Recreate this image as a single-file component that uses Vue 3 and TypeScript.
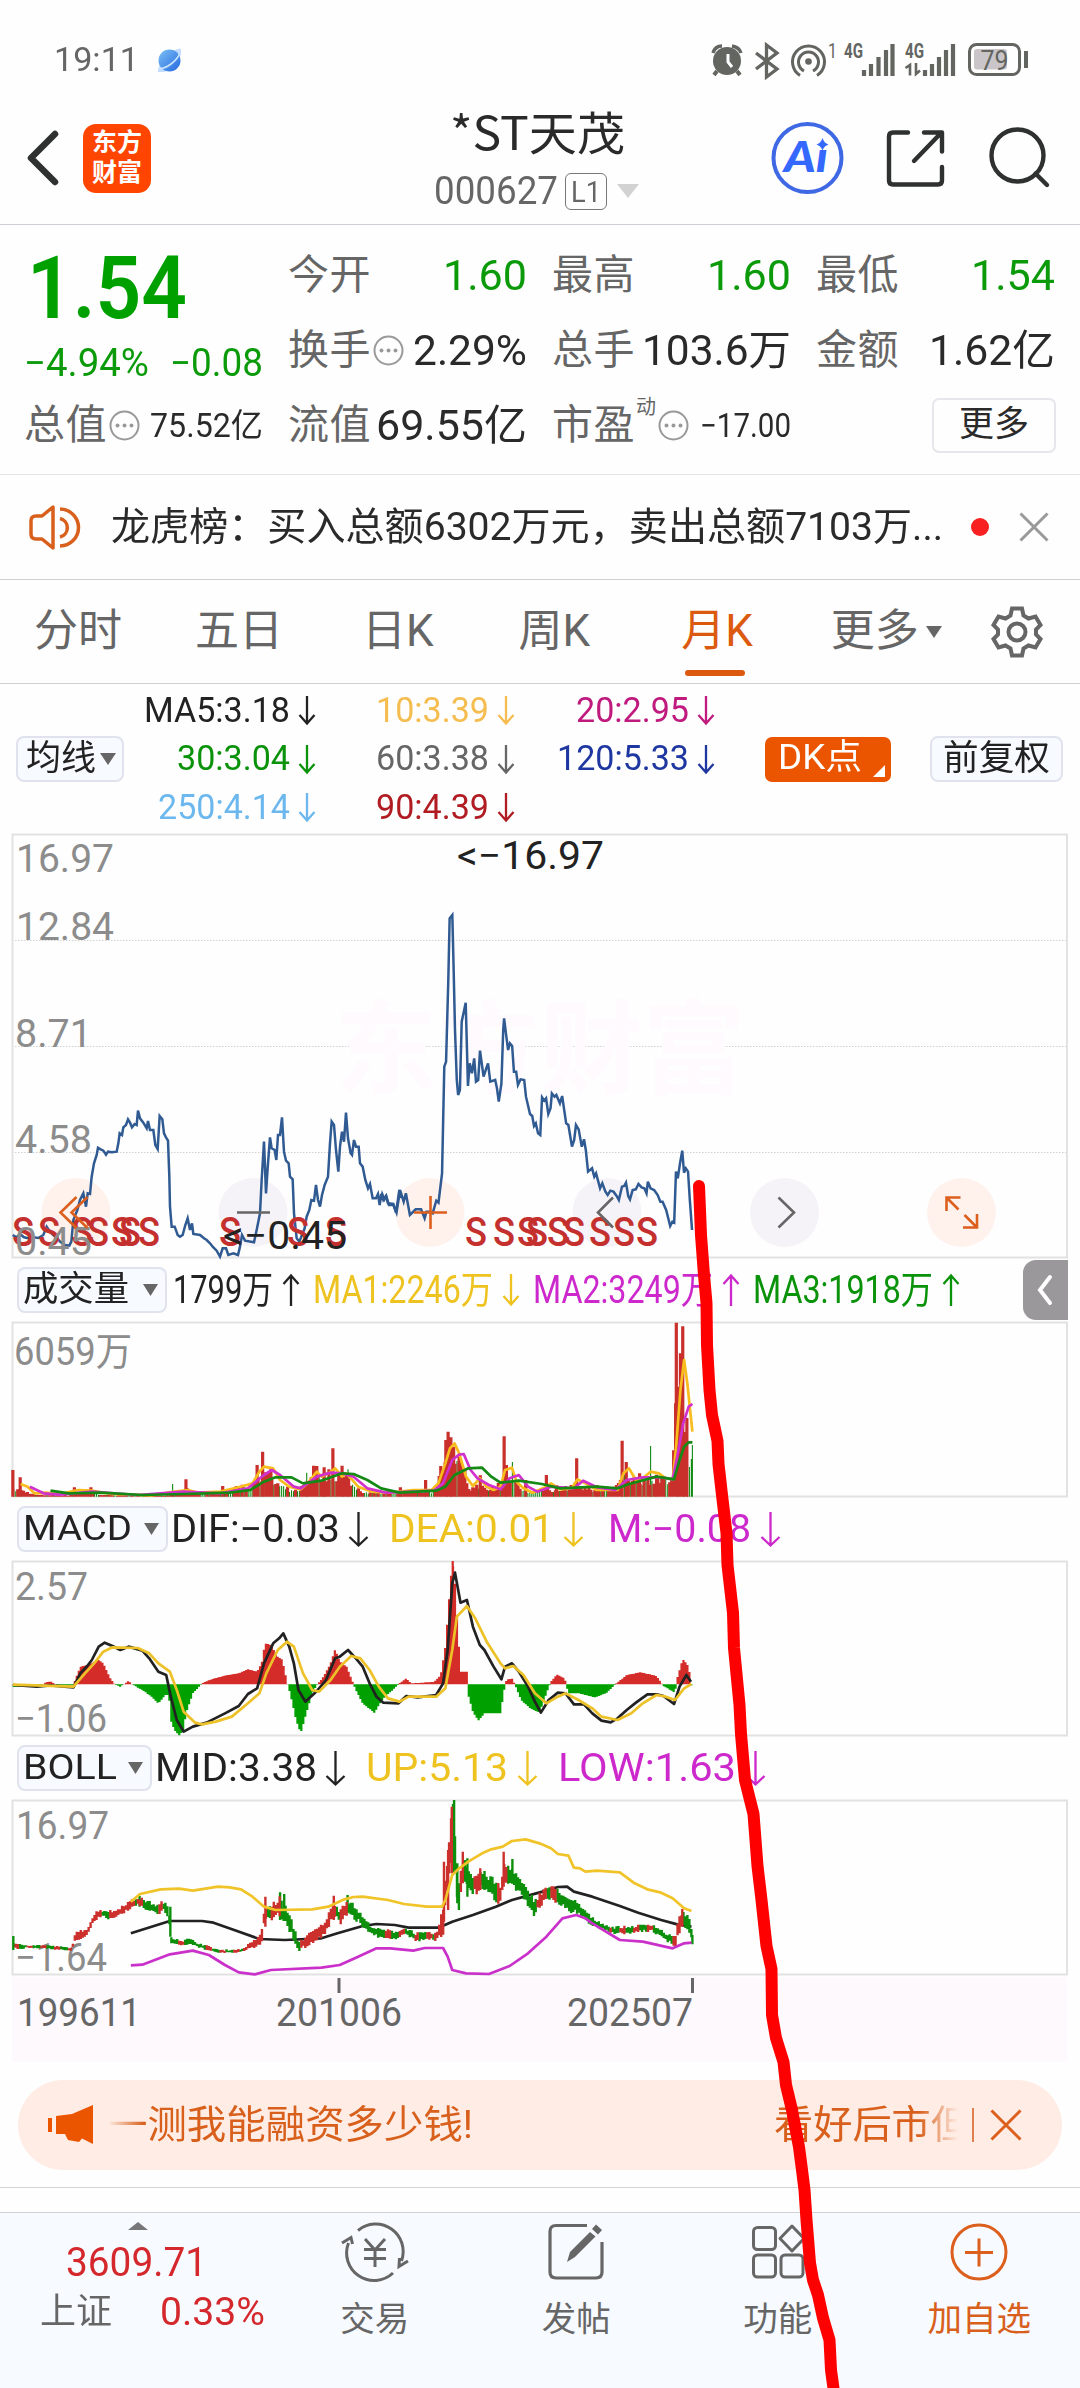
<script setup lang="ts">
import { h } from 'vue'
import type { FunctionalComponent, Directive } from 'vue'

/* Squeezes or stretches a label to the given width in pixels. */
const vFit: Directive<HTMLElement, number> = {
  mounted(el, { value }) {
    const natural = el.getBoundingClientRect().width
    el.style.transform = `scaleX(${value / natural})`
    el.style.width = `${value}px`
  },
}

const Arrow: FunctionalComponent<{ dir?: string; w?: number; ht?: number }> = (p) => {
  const w = p.w ?? 18
  const ht = p.ht ?? 29
  const d = p.dir === 'up'
    ? `M${w / 2} ${ht}V2M1.5 10L${w / 2} 1.5L${w - 1.5} 10`
    : `M${w / 2} 0V${ht - 2}M1.5 ${ht - 10}L${w / 2} ${ht - 1.5}L${w - 1.5} ${ht - 10}`
  return h('svg', { width: w, height: ht, fill: 'none', stroke: 'currentColor', 'stroke-width': 2.3 }, [h('path', { d })])
}
Arrow.props = ['dir', 'w', 'ht']

const Dots: FunctionalComponent = () =>
  h('svg', { width: 31, height: 31, viewBox: '0 0 31 31' }, [
    h('circle', { cx: 15.5, cy: 15.5, r: 14, fill: 'none', stroke: '#999', 'stroke-width': 2 }),
    ...[8.5, 15.5, 22.5].map((cx) => h('circle', { cx, cy: 15.5, r: 2, fill: '#999' })),
  ])

interface Avg { text: string; w: number; color: string }
const averages: Avg[] = [
  { text: 'MA5:3.18', w: 146, color: '#222' },
  { text: '10:3.39', w: 113, color: '#f5bd50' },
  { text: '20:2.95', w: 113, color: '#c01a7e' },
  { text: '30:3.04', w: 113, color: '#0a930a' },
  { text: '60:3.38', w: 113, color: '#666' },
  { text: '120:5.33', w: 132, color: '#1f37a0' },
  { text: '250:4.14', w: 132, color: '#6cb8ee' },
  { text: '90:4.39', w: 113, color: '#b01c22' },
]

const tabs = ['分时', '五日', '日K', '周K', '月K']

const sellMarks = [12, 38, 71, 87, 111, 119, 138, 219, 287, 325, 465, 493, 517, 526, 547, 563, 589, 613, 636]

const priceA = '38,1215 50,1222 60,1212 72,1222 85,1225 100,1222 115,1224 130,1215 140,1190 150,1205 160,1215 170,1222 180,1235 195,1245 208,1247 214,1235 220,1170 232,1140 240,1110 250,1090 258,1130 263,1090 270,1092 275,1040 282,1000 290,975 294,953 302,958 310,962 318,974 324,965 335,967 350,965 355,940 359,910 366,915 370,892 378,885 384,868 390,878 396,892 404,882 410,885 414,842 420,865 430,878 440,895 444,873 450,900 460,900 466,945 473,957 479,858 487,868 492,910 498,922 504,932 508,1040 510,1130 515,1190 524,1190 533,1215 540,1220 548,1215 556,1185 563,1165 570,1200 576,1180 580,1212 600,1215 612,1225 620,1230 630,1240 638,1250 650,1262 660,1280 668,1255 678,1255 685,1275 700,1270 714,1275 720,1250 726,1215 735,1232 762,1237 770,1200 780,1150 785,1050 792,935 798,1090 804,1000 810,922 815,955 824,960 829,990 834,915 840,915 846,862 852,965 858,992 866,1000 870,1040 878,1048 882,1150 890,1225 898,1235 906,1215 914,1195 920,1160 928,1140 934,1110 942,1112 948,1065 954,1110 960,1130 966,1095 974,1065 984,1040 990,940 995,875 1002,885 1008,960 1015,1025 1020,950 1026,905 1032,935 1038,848 1044,925 1052,970 1056,975 1062,930 1068,950 1076,950 1080,1000 1088,1010 1096,1050 1104,1075 1110,1062 1118,1105 1128,1105 1134,1092 1139,1125 1144,1092 1150,1110 1158,1098 1164,1120 1180,1122 1188,1148 1198,1080 1204,1104'
const priceB = '2,1110 5,1092 10,1108 14,1098 20,1125 30,1125 37,1148 45,1080 53,1115 58,1090 67,1155 80,1138 92,1138 100,1165 104,1145 112,1145 118,1150 126,1112 131,1118 139,1030 144,710 148,695 153,450 156,265 162,255 165,420 168,600 172,750 175,795 179,780 183,575 192,518 197,768 201,700 206,730 211,685 215,755 220,750 224,662 232,740 238,715 242,700 247,755 258,750 262,775 266,815 272,760 276,600 278,565 283,620 287,660 291,640 296,648 300,725 305,725 309,765 315,748 323,750 327,800 336,852 341,858 345,888 349,880 354,910 359,915 363,802 368,812 372,805 377,852 382,835 385,790 391,800 395,795 403,820 408,798 417,880 422,885 430,950 435,930 439,885 445,898 452,950 457,928 461,960 466,1025 475,1015 480,1040 484,1030 493,1075 498,1060 505,1085 510,1095 516,1082 523,1085 530,1098 535,1110 542,1070 547,1068 551,1058 556,1098 560,1108 566,1080 573,1078 579,1062 586,1072 592,1075 597,1090 600,1055 606,1075 614,1080 622,1095 628,1115 633,1115 641,1140 650,1188 655,1175 659,1178 663,1025 667,1045 672,1000 677,962 681,1028 685,1015 690,1025 694,1110 699,1200'

type Pt = [number, number]
const parse = (s: string): Pt[] => s.split(' ').map((p) => p.split(',').map(Number) as Pt)
const at = (pts: Pt[], x: number): number => {
  for (let i = 1; i < pts.length; i++) {
    const [x0, y0] = pts[i - 1]
    const [x1, y1] = pts[i]
    if (x <= x1) return y0 + ((y1 - y0) * (x - x0)) / (x1 - x0)
  }
  return pts[pts.length - 1][1]
}
let seed = 7
const rnd = () => ((seed = (seed * 16807) % 2147483647) / 2147483647)
const months = Array.from({ length: 345 }, (_, i) => 30 + i * 4.29)

/* volume */
const volBase = parse('28,25 40,25 60,15 80,6 150,4 165,15 200,18 220,6 370,4 380,12 405,25 430,12 480,15 520,35 545,30 560,70 580,75 600,45 640,18 660,35 680,75 700,70 720,80 750,70 775,35 790,16 870,14 940,18 955,50 970,130 985,150 998,110 1012,80 1022,25 1046,40 1060,20 1090,45 1115,70 1130,40 1150,14 1190,30 1210,18 1250,40 1290,22 1340,28 1360,75 1380,60 1440,60 1466,50 1470,430 1490,430 1495,240 1500,140 1508,140')
const volPeaks = parse('28,80 44,58 162,28 198,28 376,38 405,52 485,32 560,95 572,135 590,88 668,72 683,93 690,92 706,88 725,145 745,93 758,82 872,28 927,50 960,92 971,170 976,195 982,178 988,150 1000,120 1046,64 1098,181 1103,95 1116,104 1145,50 1190,65 1212,34 1256,115 1300,35 1355,168 1364,104 1393,70 1417,152 1430,66 1473,522 1482,430 1487,511 1496,236 1508,155')
const volThin = [376, 668, 758, 1116, 1417, 1508]
const volRed: string[] = []
const volGreen: string[] = []
for (const x of months) {
  const green = rnd() < (x > 1497 || (x > 605 && x < 660) || (x > 790 && x < 860) || (x > 1140 && x < 1180) ? 0.85 : 0.35)
  const hgt = at(volBase, x) * (green ? 0.55 + rnd() * 0.4 : 0.6 + rnd() * 0.5)
  ;(green ? volGreen : volRed).push(`M${x.toFixed(1)} 620V${(620 - hgt).toFixed(0)}`)
}
for (const [x, v] of volPeaks) (volThin.includes(x) ? volGreen : volRed).push(`M${x} 620V${620 - v}`)

const volYellow = '45,582 60,590 75,610 100,608 130,612 170,600 200,602 240,612 330,616 380,605 410,600 430,608 480,605 530,588 550,580 565,545 575,530 595,535 610,570 630,590 655,598 670,580 690,545 700,560 715,550 730,535 745,560 755,550 780,590 810,605 840,608 870,605 900,600 940,600 955,580 970,520 980,475 990,460 1000,490 1015,560 1030,588 1045,565 1060,590 1075,600 1090,590 1100,540 1115,533 1125,575 1140,595 1160,608 1190,590 1200,580 1220,598 1245,595 1258,568 1275,580 1300,600 1345,600 1358,550 1370,535 1385,570 1400,565 1417,545 1435,550 1450,565 1465,568 1472,480 1482,300 1490,210 1497,280 1508,425'
const volMagenta = '65,590 95,610 130,614 200,605 300,615 400,605 480,610 540,595 575,555 592,540 610,555 640,590 655,595 690,560 720,548 745,550 770,560 800,595 840,608 900,605 945,602 965,580 985,510 1000,494 1010,492 1025,540 1040,565 1065,585 1090,598 1110,565 1130,555 1150,590 1170,605 1200,590 1250,595 1270,572 1300,592 1340,600 1365,570 1400,562 1440,562 1465,568 1475,500 1488,400 1500,350 1508,342'
const volAvg = '110,602 150,610 220,608 310,615 400,612 500,608 545,600 575,575 600,562 635,562 660,580 700,572 745,550 770,552 800,570 830,595 870,608 950,602 970,590 990,555 1020,535 1050,533 1070,560 1090,578 1130,572 1180,582 1220,595 1300,590 1345,595 1370,582 1430,560 1468,568 1480,510 1490,470 1500,457 1508,457'

/* MACD */
const hist = parse('28,1190 90,1188 100,1176 112,1175 125,1188 160,1186 165,1165 175,1130 190,1125 215,1110 225,1120 240,1165 250,1183 262,1190 280,1173 290,1185 310,1200 330,1220 345,1240 360,1215 368,1215 372,1290 380,1320 390,1337 400,1320 405,1270 420,1210 440,1180 460,1168 490,1157 520,1150 540,1138 560,1145 570,1120 577,1060 590,1065 605,1100 615,1110 625,1175 632,1210 645,1290 655,1330 665,1280 680,1210 690,1185 705,1160 720,1120 730,1078 740,1115 755,1130 768,1175 775,1200 790,1240 815,1268 835,1225 855,1200 870,1180 885,1165 895,1180 945,1176 960,1155 970,1070 978,930 985,813 990,860 1000,1080 1003,1145 1018,1145 1020,1215 1030,1265 1042,1292 1055,1270 1090,1270 1098,1200 1103,1170 1115,1165 1122,1185 1135,1230 1155,1255 1175,1268 1190,1210 1200,1175 1213,1153 1230,1165 1238,1210 1260,1210 1295,1222 1320,1210 1340,1183 1365,1155 1395,1147 1430,1158 1445,1188 1470,1208 1475,1165 1487,1107 1500,1130 1505,1185 1512,1192')
const histRed: string[] = ['M986 1183V813']
const histGreen: string[] = []
for (const x of months) {
  const y = at(hist, x)
  ;(y < 1183 ? histRed : histGreen).push(`M${x.toFixed(1)} 1183V${y.toFixed(0)}`)
}
const dif = '28,1185 80,1190 110,1186 160,1192 175,1150 190,1128 200,1110 215,1070 228,1058 245,1068 262,1080 280,1070 310,1082 325,1105 345,1145 362,1155 372,1220 385,1290 400,1325 420,1310 450,1298 490,1270 520,1248 540,1212 560,1195 575,1120 595,1060 608,1045 617,1030 630,1070 640,1120 650,1200 665,1235 685,1210 695,1195 710,1170 730,1105 740,1100 758,1080 775,1105 790,1130 805,1180 820,1220 835,1238 868,1240 885,1218 910,1222 950,1215 965,1180 975,1080 985,880 991,848 1003,938 1017,930 1030,1010 1045,1065 1055,1080 1075,1130 1092,1168 1100,1130 1115,1120 1130,1145 1150,1190 1165,1235 1178,1268 1195,1230 1215,1208 1232,1210 1250,1243 1272,1243 1290,1270 1310,1292 1330,1297 1345,1285 1365,1260 1385,1238 1410,1213 1430,1213 1445,1218 1468,1242 1480,1190 1495,1155 1505,1175'
const dea = '28,1184 160,1190 185,1150 205,1120 225,1085 245,1072 300,1074 325,1090 345,1120 370,1145 385,1200 400,1265 425,1298 440,1303 470,1295 505,1280 540,1240 565,1210 580,1150 605,1080 625,1055 640,1070 660,1150 680,1200 695,1205 720,1170 740,1130 765,1098 785,1105 805,1140 825,1190 845,1225 870,1235 890,1220 950,1220 970,1195 985,1080 995,980 1017,948 1035,985 1060,1055 1090,1120 1100,1135 1118,1128 1140,1155 1165,1210 1190,1240 1215,1220 1232,1210 1260,1230 1290,1255 1310,1280 1345,1290 1375,1270 1400,1240 1430,1215 1450,1220 1470,1230 1490,1195 1506,1182'

/* BOLL */
const candle = parse('28,615 35,620 100,620 155,628 165,590 190,575 205,535 215,520 250,525 270,505 300,485 320,495 345,510 355,495 368,520 372,600 400,610 410,603 430,615 480,635 525,632 555,612 570,590 577,520 590,520 610,500 625,535 640,580 650,620 665,605 700,575 715,545 728,505 740,530 755,500 775,520 800,560 820,578 860,585 885,575 905,590 950,590 965,550 970,450 980,330 988,260 995,420 1000,470 1008,380 1018,400 1030,440 1045,420 1065,435 1090,465 1098,400 1110,400 1130,435 1150,475 1165,500 1190,460 1215,465 1240,500 1255,500 1290,545 1330,570 1370,570 1420,562 1450,590 1470,605 1478,560 1485,535 1500,550 1508,590')
const spread = parse('28,10 60,6 155,6 165,14 300,16 370,18 375,12 480,6 530,6 570,20 600,34 625,34 650,18 720,26 760,28 800,16 880,14 955,14 966,60 985,90 1000,55 1020,36 1095,34 1130,26 1180,28 1250,22 1300,12 1460,14 1480,28 1508,20')
const cRed: string[] = ['M578 470V560', 'M967 365V545', 'M976 330V510', 'M984 200V400', 'M1008 335V430', 'M1097 335V440', 'M727 467V540', 'M1486 507V560', 'M1046 385V450']
const cGreen: string[] = ['M29 588V630', 'M304 468V500', 'M371 500V590', 'M610 457V540', 'M619 462V530', 'M757 465V520', 'M989 180V400', 'M996 370V490', 'M1018 355V470', 'M1116 357V430', 'M1163 490V528', 'M1508 585V613']
months.forEach((x, i) => {
  const y = at(candle, x)
  const s = at(spread, x)
  const trend = at(candle, x + 6) - at(candle, x - 6)
  const red = trend < -6 ? true : trend > 6 ? false : i % 7 < 3
  const a = y - s * (0.35 + rnd() * 0.65)
  const b = y + s * (0.35 + rnd() * 0.65)
  ;(red ? cRed : cGreen).push(`M${x.toFixed(1)} ${a.toFixed(0)}V${b.toFixed(0)}`)
})
const bollUp = '285,485 305,462 350,448 390,446 420,452 475,440 500,442 525,448 550,470 575,500 600,510 680,508 715,500 750,478 770,471 790,470 845,480 880,492 930,500 963,500 970,480 985,405 1000,385 1020,365 1050,340 1070,328 1095,320 1115,303 1145,298 1175,310 1200,325 1215,342 1238,347 1250,383 1263,385 1275,395 1300,392 1350,397 1380,428 1410,448 1440,458 1465,475 1490,505 1506,513'
const bollMid = '285,580 370,543 440,543 465,548 510,570 565,597 620,600 700,595 735,580 790,558 820,552 860,555 890,563 955,563 985,545 1030,525 1080,500 1115,480 1150,467 1200,448 1215,441 1235,440 1250,455 1290,470 1350,498 1390,518 1440,540 1475,553 1506,560'
const bollLow = '285,676 310,674 370,643 420,632 455,645 490,675 520,697 555,703 590,690 700,683 740,675 780,650 820,625 850,625 900,632 925,624 965,624 975,650 985,690 1015,700 1065,702 1110,678 1150,640 1190,590 1225,535 1255,525 1275,535 1290,550 1350,600 1400,605 1465,625 1490,610 1506,608'

const stroke = '699,1186 701,1235 704,1275 706.5,1303 707,1345 709.5,1390 712,1415 717.5,1441 718.5,1464 722,1495 726.5,1533 727.5,1565 733,1613 734,1648 739.5,1705 741,1734 745,1780 753.5,1814 757.5,1866 761.5,1900 766.5,1946 771.5,1969 772,2015 776,2038 783.5,2062 786,2085 792,2110 799,2147 802,2170 804.5,2190 806.5,2220 810,2263 813,2280 818,2295 823,2318 829.5,2340 831,2370 834,2392'
</script>

<template>
  <main class="page">
    <div class="status">
      <span v-fit="85" class="time">19:11</span>
      <svg class="planet" width="25" height="25" viewBox="0 0 25 25">
        <defs>
          <linearGradient id="pl" x1="0" y1="0" x2="1" y2="1"><stop offset="0" stop-color="#7cc0f5" /><stop offset="1" stop-color="#2468e0" /></linearGradient>
        </defs>
        <path d="M1 24c-2-7 16-26 23-23v6L8 24z" fill="#c3dcff" />
        <circle cx="12.500" cy="12.500" r="11" fill="url(#pl)" />
        <path d="M2 20.500C9 21 20 13 23 5" fill="none" stroke="#c7e3ff" stroke-width="1.800" />
      </svg>
      <svg class="icons" width="320" height="36" viewBox="711 42 320 36" fill="none" stroke="#636561">
        <circle cx="727" cy="61" r="14" fill="#636561" stroke="none" />
        <path d="M713 53q2-7 9-7M732 46q7 1 9 7" stroke-width="3.500" />
        <path d="M717 71l-3 4M737 71l3 4" stroke-width="4" />
        <path d="M728 54v8l4 5" stroke="#fff" stroke-width="3" />
        <path d="M756 53l21 16-10.500 8V45l10.500 8-21 16" stroke-width="3.300" />
        <circle cx="808.500" cy="61.500" r="3.300" fill="#636561" stroke="none" />
        <path d="M804 71a10 10 0 1 1 9 0M800 75.500a16 16 0 1 1 17 0" stroke-width="3" />
        <text x="828" y="58" font-size="20" textLength="9" lengthAdjust="spacingAndGlyphs" class="st">1</text>
        <text x="844" y="58" font-size="20" font-weight="700" textLength="19" lengthAdjust="spacingAndGlyphs" class="st">4G</text>
        <text x="905" y="58" font-size="20" font-weight="700" textLength="19" lengthAdjust="spacingAndGlyphs" class="st">4G</text>
        <path d="M864 70v6M871 64v12M878.500 57v19M886 50v26M892.500 44v32M925 70v6M932 64v12M939 57v19M946 50v26M953 44v32" stroke-width="4.200" />
        <path d="M905.500 68l4.500-3v10.500M916 63v11l4-3.500" stroke-width="2.600" />
        <rect x="974" y="49" width="33" height="20.500" rx="3" fill="#c9c5c9" stroke="none" />
        <rect x="969.500" y="44.500" width="50" height="30" rx="7" stroke-width="3" />
        <path d="M1026 51v17" stroke-width="4" />
        <text x="980.500" y="70" font-size="28" textLength="28" lengthAdjust="spacingAndGlyphs" class="st">79</text>
      </svg>
    </div>

    <header class="head">
      <svg class="back" width="36" height="60" viewBox="0 0 36 60"><path d="M30 6L6 30L30 54" fill="none" stroke="#2f3130" stroke-width="6.500" stroke-linecap="round" stroke-linejoin="round" /></svg>
      <div class="logo"><span>东方</span><span>财富</span></div>
      <div class="name">
        <h1><span v-fit="175" class="t">*ST天茂</span></h1>
        <div class="code">
          <span v-fit="124" class="t">000627</span>
          <b><span v-fit="30" class="t">L1</span></b>
          <svg width="22" height="14"><path d="M0 0h22L11 14z" fill="#d2d2d2" /></svg>
        </div>
      </div>
      <svg class="tools" width="284" height="76" viewBox="770 119 284 76" fill="none" stroke="#2f3130" stroke-width="4.400" stroke-linecap="round">
        <circle cx="808.500" cy="157" r="34" stroke="#3f68e4" stroke-width="4" />
        <text x="785" y="171" font-size="42" font-weight="900" textLength="44" lengthAdjust="spacingAndGlyphs" class="ai">Aı</text>
        <path d="M823.500 137q1.500 5 6 6.500q-4.500 1.500-6 6q-1.500-4.500-6-6q4.500-1.500 6-6.500z" fill="#3468ff" stroke="none" />
        <path d="M909 131.500h-15q-4 0-4 4v44q0 4 4 4h45q4 0 4-4v-13.500M915 160L942 132M925 131.500h18v19" stroke-linejoin="round" />
        <circle cx="1018.500" cy="154.500" r="26" />
        <path d="M1036.500 172.500l11.500 11.500" />
      </svg>
    </header>

    <section class="quote">
      <div class="col lead">
        <div class="last"><span v-fit="160" class="t">1.54</span></div>
        <div class="chg"><span v-fit="125" class="t">−4.94%</span><span v-fit="93" class="t">−0.08</span></div>
        <div class="cell"><label>总值</label><Dots /><em class="sm"><span v-fit="113" class="t">75.52亿</span></em></div>
      </div>
      <div class="col">
        <div class="cell"><label>今开</label><em class="g"><span v-fit="84" class="t">1.60</span></em></div>
        <div class="cell"><label>换手</label><Dots /><em><span v-fit="114" class="t">2.29%</span></em></div>
        <div class="cell"><label>流值</label><em><span v-fit="151" class="t">69.55亿</span></em></div>
      </div>
      <div class="col">
        <div class="cell"><label>最高</label><em class="g"><span v-fit="84" class="t">1.60</span></em></div>
        <div class="cell"><label>总手</label><em><span v-fit="149" class="t">103.6万</span></em></div>
        <div class="cell"><label>市盈</label><sup>动</sup><Dots /><em class="sm"><span v-fit="91" class="t">−17.00</span></em></div>
      </div>
      <div class="col">
        <div class="cell"><label>最低</label><em class="g"><span v-fit="84" class="t">1.54</span></em></div>
        <div class="cell"><label>金额</label><em><span v-fit="126" class="t">1.62亿</span></em></div>
        <div class="cell end"><button class="more">更多</button></div>
      </div>
    </section>

    <section class="news">
      <svg width="54" height="46" viewBox="28 503 54 46" fill="none" stroke="#d8601c" stroke-width="3.500">
        <path d="M31 520q0-5 5-5h6l11-9v41l-11-9h-6q-5 0-5-5z" stroke-linejoin="round" />
        <path d="M60 508a18.500 18.500 0 0 1 0 37M60 517.500a9.500 9.500 0 0 1 0 18.500" />
      </svg>
      <p><span v-fit="832" class="t">龙虎榜：买入总额6302万元，卖出总额7103万...</span></p>
      <i class="dot"></i>
      <svg class="x" width="30" height="30"><path d="M1.500 1.500l27 27M28.500 1.500l-27 27" stroke="#999" stroke-width="3" /></svg>
    </section>

    <nav class="tabs">
      <span v-for="t in tabs" :key="t" :class="{ on: t === '月K' }">{{ t }}</span>
      <span class="moretab">更多<svg width="16" height="12"><path d="M0 0h16L8 12z" fill="#666" /></svg></span>
      <svg class="gear" width="54" height="54" viewBox="-27 -27 54 54" fill="none" stroke="#666" stroke-width="4">
        <circle r="8.500" />
        <path d="M-5-23.500H5L6.500-16.500L11.500-13.500L18.500-15.500L23.500-7L19-2.500V2.500L23.500 7L18.500 15.500L11.500 13.500L6.500 16.500L5 23.500H-5L-6.500 16.500L-11.500 13.500L-18.500 15.500L-23.500 7L-19 2.500V-2.500L-23.500-7L-18.500-15.500L-11.500-13.500L-6.500-16.500Z" />
      </svg>
    </nav>

    <section class="ma">
      <button class="pill avg"><span v-fit="70" class="t">均线</span><svg width="16" height="12"><path d="M0 0h16L8 12z" fill="#666" /></svg></button>
      <div class="grid">
        <div v-for="a in averages" :key="a.text" :style="{ color: a.color }"><span v-fit="a.w" class="t">{{ a.text }}</span><Arrow /></div>
      </div>
      <button class="dk"><span v-fit="84" class="t">DK点</span><svg width="12" height="12"><path d="M12 0v12H0z" fill="#fff" /></svg></button>
      <button class="pill adj"><span v-fit="107" class="t">前复权</span></button>
    </section>

    <svg class="panel" width="1080" height="424" viewBox="0 834 1080 424">
      <path d="M12 940.500H1067M12 1046.500H1067M12 1152.500H1067" stroke="#d2d2d2" stroke-width="1" stroke-dasharray="1.500 1.500" />
      <text x="335" y="1086" font-size="102" font-weight="700" textLength="410" lengthAdjust="spacingAndGlyphs" fill="#fefafe">东方财富</text>
      <rect x="12.500" y="834.500" width="1054.500" height="423" fill="none" stroke="#e2e2e2" stroke-width="2" />
      <circle v-for="(c, i) in [76, 253, 430, 607, 784.5, 961.5]" :key="c" :cx="c" cy="1212.500" r="34.500" :fill="[0, 2, 5].includes(i) ? '#fff2ed' : '#f6f3f8'" />
      <g fill="none" stroke="#305a92" stroke-width="2.500">
        <g transform="translate(0 830) scale(.33333)"><polyline :points="priceA" vector-effect="non-scaling-stroke" /></g>
        <g transform="translate(380 830) scale(.44643 .33333)"><polyline :points="priceB" vector-effect="non-scaling-stroke" /></g>
      </g>
      <g class="s"><text v-for="x in sellMarks" :key="x" :x="x" y="1246" textLength="22" lengthAdjust="spacingAndGlyphs">S</text></g>
      <g class="lab">
        <text x="16" y="872" textLength="98" lengthAdjust="spacingAndGlyphs">16.97</text>
        <text x="16" y="939.500" textLength="98" lengthAdjust="spacingAndGlyphs">12.84</text>
        <text x="15" y="1046.500" textLength="77" lengthAdjust="spacingAndGlyphs">8.71</text>
        <text x="15" y="1153" textLength="77" lengthAdjust="spacingAndGlyphs">4.58</text>
        <text x="15" y="1254.500" textLength="77" lengthAdjust="spacingAndGlyphs">0.45</text>
      </g>
      <g class="lab dark">
        <text x="457" y="869" textLength="147" lengthAdjust="spacingAndGlyphs">&lt;−16.97</text>
        <text x="223" y="1249" textLength="124" lengthAdjust="spacingAndGlyphs">&lt;−0.45</text>
      </g>
      <g fill="none" stroke="#666" stroke-width="2.600">
        <path d="M76.500 1197L60.500 1212.500L76.500 1228M87.500 1197L71.500 1212.500L87.500 1228" stroke="#dc5f1e" />
        <path d="M237 1212.500h33" />
        <path d="M414 1212.500h33M430.500 1196v33" stroke="#dc5f1e" />
        <path d="M613 1197.500L598 1212.500L613 1227.500M778.500 1197.500L794 1212.500L778.500 1227.500" />
        <path d="M946.500 1211v-13.500h14M947 1198l11.500 11.500M977 1214v13.500h-14M976.500 1227l-12-12" stroke="#dc5f1e" />
      </g>
    </svg>

    <div class="bar">
      <button class="pill ind vol"><span v-fit="106" class="t">成交量</span><svg width="15" height="12"><path d="M0 0h15L7.500 12z" fill="#666" /></svg></button>
      <span class="v1"><span v-fit="100" class="t">1799万</span><Arrow dir="up" :ht="32" /></span>
      <span class="v2 y"><span v-fit="180" class="t">MA1:2246万</span><Arrow :ht="32" /></span>
      <span class="v2 m"><span v-fit="180" class="t">MA2:3249万</span><Arrow dir="up" :ht="32" /></span>
      <span class="v2 gr"><span v-fit="180" class="t">MA3:1918万</span><Arrow dir="up" :ht="32" /></span>
      <button class="handle"><svg width="16" height="30"><path d="M13 2L3 15l10 13" fill="none" stroke="#fff" stroke-width="4" stroke-linecap="round" /></svg></button>
    </div>

    <svg class="panel" width="1080" height="175" viewBox="0 1322 1080 175">
      <rect x="12.500" y="1322.500" width="1054.500" height="174" fill="none" stroke="#e2e2e2" stroke-width="2" />
      <text class="lab" x="14" y="1365" textLength="118" lengthAdjust="spacingAndGlyphs">6059万</text>
      <g transform="translate(0 1290) scale(.45914 .33333)" fill="none" class="nss">
        <path :d="volGreen.join('')" stroke="#0f8a12" stroke-width="1.100" />
        <path :d="volRed.join('')" stroke="#c9302c" stroke-width="3.200" />
        <polyline :points="volYellow" stroke="#f8bd1c" />
        <polyline :points="volMagenta" stroke="#d030cc" />
        <polyline :points="volAvg" stroke="#148a14" />
      </g>
    </svg>

    <div class="bar">
      <button class="pill ind macd"><span v-fit="109" class="t">MACD</span><svg width="15" height="12"><path d="M0 0h15L7.500 12z" fill="#666" /></svg></button>
      <span class="w1"><span v-fit="169" class="t">DIF:−0.03</span><Arrow :w="21" :ht="35" /></span>
      <span class="w2 y"><span v-fit="165" class="t">DEA:0.01</span><Arrow :w="21" :ht="35" /></span>
      <span class="w2 m last-m"><span v-fit="143" class="t">M:−0.08</span><Arrow :w="21" :ht="35" /></span>
    </div>

    <svg class="panel" width="1080" height="175" viewBox="0 1561 1080 175">
      <rect x="12.500" y="1561.500" width="1054.500" height="174" fill="none" stroke="#e2e2e2" stroke-width="2" />
      <g transform="translate(0 1290) scale(.45914 .33333)" fill="none" class="nss">
        <path :d="histGreen.join('')" stroke="#00a000" stroke-width="2.200" />
        <path :d="histRed.join('')" stroke="#d42c28" stroke-width="2.200" />
        <polyline :points="dif" stroke="#222" />
        <polyline :points="dea" stroke="#edc228" />
      </g>
      <g class="lab">
        <text x="15" y="1600" textLength="73" lengthAdjust="spacingAndGlyphs">2.57</text>
        <text x="15" y="1732" textLength="92" lengthAdjust="spacingAndGlyphs">−1.06</text>
      </g>
    </svg>

    <div class="bar">
      <button class="pill ind boll"><span v-fit="94" class="t">BOLL</span><svg width="15" height="12"><path d="M0 0h15L7.500 12z" fill="#666" /></svg></button>
      <span class="w1"><span v-fit="162" class="t">MID:3.38</span><Arrow :w="21" :ht="35" /></span>
      <span class="w2 y"><span v-fit="142" class="t">UP:5.13</span><Arrow :w="21" :ht="35" /></span>
      <span class="w2 m"><span v-fit="178" class="t">LOW:1.63</span><Arrow :w="21" :ht="35" /></span>
    </div>

    <svg class="panel" width="1080" height="175" viewBox="0 1800 1080 175">
      <rect x="12.500" y="1800.500" width="1054.500" height="174" fill="none" stroke="#e2e2e2" stroke-width="2" />
      <g class="lab">
        <text x="16" y="1838.500" textLength="93" lengthAdjust="spacingAndGlyphs">16.97</text>
        <text x="15" y="1971" textLength="92" lengthAdjust="spacingAndGlyphs">−1.64</text>
      </g>
      <g transform="translate(0 1740) scale(.45914 .33333)" fill="none" class="nss">
        <polyline :points="bollMid" stroke="#222" />
        <path :d="cGreen.join('')" stroke="#0c900c" stroke-width="2.400" />
        <path :d="cRed.join('')" stroke="#cc302c" stroke-width="2.400" />
        <polyline :points="bollUp" stroke="#f0c428" />
        <polyline :points="bollLow" stroke="#ca30ca" />
      </g>
    </svg>

    <svg class="panel" width="1080" height="87" viewBox="0 1975 1080 87">
      <rect x="12" y="1977" width="1055.500" height="85" fill="#fdf9fd" />
      <path d="M339 1978v15M692.500 1978v15" stroke="#666" stroke-width="3" />
      <g class="lab axis">
        <text x="17" y="2025.500" textLength="124" lengthAdjust="spacingAndGlyphs">199611</text>
        <text x="276" y="2025.500" textLength="126" lengthAdjust="spacingAndGlyphs">201006</text>
        <text x="567" y="2025.500" textLength="126" lengthAdjust="spacingAndGlyphs">202507</text>
      </g>
    </svg>

    <section class="promo">
      <svg width="46" height="40" viewBox="0 0 46 40" fill="#ec5500"><path d="M0 13h4v14H0zM8 11L24 9L45 0V39L34 33.500L31 37L20 35L17 29H8z" /></svg>
      <p class="a"><span v-fit="365" class="t">一测我能融资多少钱!</span></p>
      <p class="b"><span v-fit="196" class="t">看好后市但</span></p>
      <i></i>
      <svg class="px" width="32" height="32"><path d="M1.500 1.500l29 29M30.500 1.500l-29 29" stroke="#dc5f1e" stroke-width="3" /></svg>
    </section>

    <footer class="foot">
      <div class="index">
        <svg width="20" height="8"><path d="M10 0l10 8H0z" fill="#77777a" /></svg>
        <div class="pt"><span v-fit="141" class="t">3609.71</span></div>
        <div class="pc"><span v-fit="72" class="t">上证</span><b><span v-fit="105" class="t">0.33%</span></b></div>
      </div>
      <div class="item">
        <svg width="68" height="62" viewBox="-34 -31 68 62" fill="none" stroke="#666" stroke-width="3">
          <path d="M-17-21.500A27.500 27.500 0 0 1 26.500 9M18 21A27.500 27.500 0 0 1-26.500-9M-33-9L-24-14.500L-22.500-8M33 9L24 14.500L24.500 6M-10-13L0-2L10-13M0-2V15M-11-2.500H11M-11 6.500H11" />
        </svg>
        <span>交易</span>
      </div>
      <div class="item">
        <svg width="58" height="62" viewBox="-29 -31 58 62" fill="none" stroke="#666" stroke-width="3.200">
          <path d="M11-26.500H-20Q-26-26.500-26-20.500V20Q-26 26 -20 26H20Q26 26 26 20V-10" />
          <path d="M-9 10L-6 0L14-20L19.500-15.500L-1 5zM16-23L20-27.500L26-22L22-17.500z" fill="#666" stroke="none" />
        </svg>
        <span>发帖</span>
      </div>
      <div class="item">
        <svg width="58" height="62" viewBox="-29 -31 58 62" fill="none" stroke="#666" stroke-width="3">
          <rect x="-24.500" y="-24.500" width="22" height="22" rx="4" /><rect x="-24.500" y="3" width="22" height="22" rx="4" /><rect x="3" y="3" width="22" height="22" rx="4" />
          <path d="M14-26L26-13.500L14-1L2-13.500z" stroke-linejoin="round" />
        </svg>
        <span>功能</span>
      </div>
      <div class="item o">
        <svg width="58" height="62" viewBox="-29 -31 58 62" fill="none" stroke="#dc5f1e" stroke-width="3"><circle r="27" /><path d="M-14 0.500H14M0-13.500V14.500" /></svg>
        <span>加自选</span>
      </div>
    </footer>

    <svg class="draw" width="1080" height="2388"><polyline :points="stroke" fill="none" stroke="#f00" stroke-width="12" stroke-linecap="round" stroke-linejoin="round" /></svg>
  </main>
</template>

<style>
body { background: #fefefe; }
</style>
<style scoped>
.page { position: relative; width: 1080px; height: 2388px; overflow: hidden; background: #fefefe; font-family: Roboto, "Noto Sans CJK SC", sans-serif; color: #2a2a2a; }
.page * { box-sizing: border-box; }
svg { display: block; flex: none; overflow: visible; }
h1, p { margin: 0; font-weight: 400; }
em { font-style: normal; }
button { font: inherit; color: inherit; padding: 0; border: 0; background: none; }
.t, .time { display: inline-block; white-space: nowrap; transform-origin: left center; text-align: left; flex: none; }
.status { height: 92px; padding: 26px 49px 0 54px; display: flex; align-items: center; }
.time { font-size: 34px; color: #666; }
.planet { margin-left: 18px; margin-top: 2px; }
.icons { margin-left: auto; margin-top: 1px; }
.st { fill: #636561; stroke: none; font-family: Roboto, sans-serif; }
.ai { fill: #3468ff; stroke: none; font-family: Lato, Roboto, sans-serif; font-style: italic; }
.head { height: 133px; border-bottom: 1px solid #cfcfd6; display: flex; align-items: center; padding: 0 27px 0 25px; }
.logo { margin-left: 22px; width: 68px; height: 69px; border-radius: 13px; background: #ff4500; color: #fff; font-size: 25px; font-weight: 700; line-height: 30px; display: flex; flex-direction: column; justify-content: center; align-items: center; }
.name { margin-left: 283px; width: 210px; align-self: stretch; }
.name h1 { margin-left: 16px; font-size: 46px; line-height: 60px; margin-top: 8px; font-family: "Noto Sans CJK SC", sans-serif; }
.code { display: flex; align-items: center; color: #666; font-size: 38px; line-height: 50px; margin-top: 6px; }
.code b { margin-left: 7px; width: 42px; height: 37px; border: 1px solid #777; border-radius: 6px; font-weight: 400; font-size: 30px; line-height: 35px; padding-left: 5px; }
.code svg { margin-left: 10px; }
.tools { margin-left: auto; }
.quote { height: 250px; padding: 13px 25px 0 26px; display: grid; grid-template-columns: repeat(4, 237px); column-gap: 27px; border-bottom: 1px solid #e4e4e4; }
.cell { height: 75px; display: flex; align-items: center; line-height: 75px; font-size: 42px; }
label { color: #666; font-size: 41px; letter-spacing: .5px; margin: 0 2px 0 -2px; }
.cell em { margin-left: auto; }
.cell em.sm { font-size: 33px; }
.g, .last, .chg { color: #0a9a0a; }
.last { height: 99px; line-height: 101px; font-size: 87px; font-weight: 600; color: #00a000; padding-left: 1px; }
.chg { height: 51px; line-height: 53px; font-size: 38px; display: flex; justify-content: space-between; margin-left: -2px; }
sup { font-size: 20px; line-height: 24px; color: #666; margin: -38px 2px 0 -1px; }
.cell.end { justify-content: flex-end; }
.more { width: 124px; height: 55px; margin-right: -1px; border: 2px solid #e6e6ec; border-radius: 7px; font-size: 35px; line-height: 44px; padding-bottom: 2px; }
.news { height: 105px; border-bottom: 1px solid #cfcfcf; display: flex; align-items: center; padding-left: 28px; font-size: 39px; }
.news p { margin-left: 29px; line-height: 60px; width: 832px; }
.dot { margin-left: 28px; width: 18px; height: 18px; border-radius: 50%; background: #f82020; }
.x { margin-left: 30px; }
.tabs { height: 104px; border-bottom: 1px solid #cfcfcf; display: flex; align-items: center; color: #666; font-size: 44px; padding-left: 34px; line-height: 105px; }
.tabs > span { position: relative; }
.tabs > span:nth-child(2) { margin-left: 73px; }
.tabs > span:nth-child(3) { margin-left: 79px; }
.tabs > span:nth-child(4) { margin-left: 85px; }
.tabs > span:nth-child(5) { margin-left: 91px; }
.tabs .on { color: #dc5a10; }
.tabs .on::after { content: ""; position: absolute; left: 4px; bottom: 8px; width: 60px; height: 6px; border-radius: 3px; background: #dc5a10; }
.tabs .moretab { margin-left: 78px; display: flex; align-items: center; }
.moretab svg { margin-left: 7px; }
.gear { margin-left: 48px; }
.ma { height: 150px; display: flex; align-items: center; padding: 0 16px; }
.pill { height: 46px; border: 2px solid #e0e3ee; border-radius: 8px; background: #f7faff; display: flex; align-items: center; line-height: 40px; font-size: 35px; color: #222; }
.avg { width: 108px; padding-left: 8px; }
.avg svg { margin-left: 4px; }
.grid { display: grid; grid-template-columns: 192px 199px 200px; grid-auto-rows: 48.5px; font-size: 35px; line-height: 48px; }
.grid div { display: flex; justify-content: flex-end; align-items: center; gap: 8px; }
.dk { margin-left: 50px; width: 126px; height: 45px; background: #ec5500; color: #fff; border-radius: 7px; font-size: 35px; line-height: 42px; display: flex; padding-left: 13px; }
.dk svg { margin: 28px 0 0 11px; }
.adj { margin-left: 39px; width: 133px; padding-left: 11px; }
.panel text { font-family: Roboto, "Noto Sans CJK SC", sans-serif; }
.lab { font-size: 39px; fill: #8c8c8c; }
.dark { fill: #222; }
.axis { fill: #666; }
.s { font-size: 41px; fill: #c4302e; font-weight: 500; }
.nss > * { vector-effect: non-scaling-stroke; }
.nss polyline { stroke-width: 2.7; stroke-linejoin: round; }
.bar { height: 64px; padding: 0 12px 0 17px; display: flex; align-items: center; font-size: 38px; line-height: 60px; color: #222; }
.bar > span { display: flex; align-items: center; }
.ind { justify-content: space-between; padding: 0 7px 0 4px; }
.vol { width: 150px; }
.macd { width: 151px; }
.boll { width: 135px; }
.v1 { margin-left: 6px; }
.v1, .v2 { gap: 9px; }
.v2 { margin-left: 13px; }
.w1 { margin-left: 3px; gap: 8px; }
.w2 { margin-left: 20px; gap: 9px; }
.last-m { margin-left: 24px; }
.y { color: #eec31f; }
.m { color: #cc28cc; }
.gr { color: #0a930a; }
.handle { margin-left: auto; width: 45px; height: 60px; border-radius: 13px 0 0 13px; background: #9a989a; padding-left: 14px; }
.promo { margin: 18px 18px 0; height: 90px; border-radius: 45px; background: #ffece4; display: flex; align-items: center; color: #d8601c; font-size: 39px; line-height: 84px; padding-left: 30px; }
.promo .a { margin-left: 14px; width: 365px; -webkit-mask-image: linear-gradient(90deg, transparent, #000 36px); mask-image: linear-gradient(90deg, transparent, #000 36px); }
.promo .b { margin-left: 301px; width: 184px; overflow: hidden; -webkit-mask-image: linear-gradient(90deg, #000 145px, transparent 184px); mask-image: linear-gradient(90deg, #000 145px, transparent 184px); }
.promo i { margin-left: 14px; width: 2px; height: 34px; background: #e08050; }
.px { margin-left: 16px; }
.foot { margin-top: 17px; border-top: 1px solid #d4d4d4; height: 201px; padding-top: 23px; display: flex; position: relative; }
.foot::before { content: ""; position: absolute; left: 0; right: 0; top: 24px; bottom: 0; background: #f7faff; border-top: 1px solid #cfd1d5; }
.foot > div { position: relative; }
.index { width: 274px; padding-top: 11px; }
.index > svg { margin-left: 128px; }
.pt { margin: 8px 0 0 66px; height: 50px; line-height: 50px; font-size: 40px; color: #d4282c; }
.pc { margin: -1px 0 0 40px; display: flex; line-height: 50px; font-size: 36px; color: #666; }
.pc b { margin-left: 48px; font-weight: 400; font-size: 38px; color: #d4282c; }
.item { width: 201.5px; display: flex; flex-direction: column; align-items: center; padding-top: 10px; font-size: 34.5px; color: #666; }
.item span { line-height: 50px; margin-top: 11px; }
.o { color: #d8601c; }
.draw { position: absolute; left: 0; top: 0; }
</style>
